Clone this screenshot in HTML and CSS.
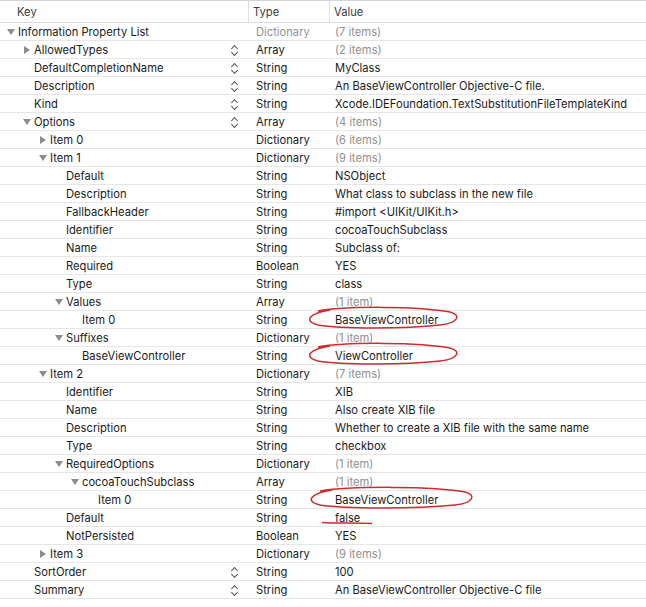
FILE: index.html
```html
<!DOCTYPE html>
<html>
<head>
<meta charset="utf-8">
<link rel="stylesheet" href="styles.css">
</head>
<body>
<div class="plist">
  <div class="hdr">
    <div class="hc hk">Key</div>
    <div class="hc ht">Type</div>
    <div class="hc hv">Value</div>
  </div>

  <div class="row"><div class="key l0"><span class="tri down"></span><span>Information Property List</span></div><div class="type dim">Dictionary</div><div class="val dim">(7 items)</div></div>
  <div class="row"><div class="key l1"><span class="tri right"></span><span>AllowedTypes</span><span class="step"></span></div><div class="type">Array</div><div class="val dim">(2 items)</div></div>
  <div class="row"><div class="key l1"><span class="tri"></span><span>DefaultCompletionName</span><span class="step"></span></div><div class="type">String</div><div class="val">MyClass</div></div>
  <div class="row"><div class="key l1"><span class="tri"></span><span>Description</span><span class="step"></span></div><div class="type">String</div><div class="val">An BaseViewController Objective-C file.</div></div>
  <div class="row"><div class="key l1"><span class="tri"></span><span>Kind</span><span class="step"></span></div><div class="type">String</div><div class="val">Xcode.IDEFoundation.TextSubstitutionFileTemplateKind</div></div>
  <div class="row"><div class="key l1"><span class="tri down"></span><span>Options</span><span class="step"></span></div><div class="type">Array</div><div class="val dim">(4 items)</div></div>
  <div class="row"><div class="key l2"><span class="tri right"></span><span>Item 0</span></div><div class="type">Dictionary</div><div class="val dim">(6 items)</div></div>
  <div class="row"><div class="key l2"><span class="tri down"></span><span>Item 1</span></div><div class="type">Dictionary</div><div class="val dim">(9 items)</div></div>
  <div class="row"><div class="key l3"><span class="tri"></span><span>Default</span></div><div class="type">String</div><div class="val">NSObject</div></div>
  <div class="row"><div class="key l3"><span class="tri"></span><span>Description</span></div><div class="type">String</div><div class="val">What class to subclass in the new file</div></div>
  <div class="row"><div class="key l3"><span class="tri"></span><span>FallbackHeader</span></div><div class="type">String</div><div class="val">#import &lt;UIKit/UIKit.h&gt;</div></div>
  <div class="row"><div class="key l3"><span class="tri"></span><span>Identifier</span></div><div class="type">String</div><div class="val">cocoaTouchSubclass</div></div>
  <div class="row"><div class="key l3"><span class="tri"></span><span>Name</span></div><div class="type">String</div><div class="val">Subclass of:</div></div>
  <div class="row"><div class="key l3"><span class="tri"></span><span>Required</span></div><div class="type">Boolean</div><div class="val">YES</div></div>
  <div class="row"><div class="key l3"><span class="tri"></span><span>Type</span></div><div class="type">String</div><div class="val">class</div></div>
  <div class="row"><div class="key l3"><span class="tri down"></span><span>Values</span></div><div class="type">Array</div><div class="val dim">(1 item)</div></div>
  <div class="row"><div class="key l4"><span class="tri"></span><span>Item 0</span></div><div class="type">String</div><div class="val">BaseViewController</div></div>
  <div class="row"><div class="key l3"><span class="tri down"></span><span>Suffixes</span></div><div class="type">Dictionary</div><div class="val dim">(1 item)</div></div>
  <div class="row"><div class="key l4"><span class="tri"></span><span>BaseViewController</span></div><div class="type">String</div><div class="val">ViewController</div></div>
  <div class="row"><div class="key l2"><span class="tri down"></span><span>Item 2</span></div><div class="type">Dictionary</div><div class="val dim">(7 items)</div></div>
  <div class="row"><div class="key l3"><span class="tri"></span><span>Identifier</span></div><div class="type">String</div><div class="val">XIB</div></div>
  <div class="row"><div class="key l3"><span class="tri"></span><span>Name</span></div><div class="type">String</div><div class="val">Also create XIB file</div></div>
  <div class="row"><div class="key l3"><span class="tri"></span><span>Description</span></div><div class="type">String</div><div class="val">Whether to create a XIB file with the same name</div></div>
  <div class="row"><div class="key l3"><span class="tri"></span><span>Type</span></div><div class="type">String</div><div class="val">checkbox</div></div>
  <div class="row"><div class="key l3"><span class="tri down"></span><span>RequiredOptions</span></div><div class="type">Dictionary</div><div class="val dim">(1 item)</div></div>
  <div class="row"><div class="key l4"><span class="tri down"></span><span>cocoaTouchSubclass</span></div><div class="type">Array</div><div class="val dim">(1 item)</div></div>
  <div class="row"><div class="key l5"><span class="tri"></span><span>Item 0</span></div><div class="type">String</div><div class="val">BaseViewController</div></div>
  <div class="row"><div class="key l3"><span class="tri"></span><span>Default</span></div><div class="type">String</div><div class="val">false</div></div>
  <div class="row"><div class="key l3"><span class="tri"></span><span>NotPersisted</span></div><div class="type">Boolean</div><div class="val">YES</div></div>
  <div class="row"><div class="key l2"><span class="tri right"></span><span>Item 3</span></div><div class="type">Dictionary</div><div class="val dim">(9 items)</div></div>
  <div class="row"><div class="key l1"><span class="tri"></span><span>SortOrder</span><span class="step"></span></div><div class="type">String</div><div class="val">100</div></div>
  <div class="row"><div class="key l1"><span class="tri"></span><span>Summary</span><span class="step"></span></div><div class="type">String</div><div class="val">An BaseViewController Objective-C file</div></div>

  <svg class="marks" width="646" height="607" viewBox="0 0 646 607">
    <path d="M318 311 C 345 306, 420 306, 450 312 C 462 315, 458 323, 440 325 C 405 329, 340 329, 318 325 C 305 322, 306 314, 330 310" />
    <path d="M318 347 C 345 342, 420 342, 450 348 C 462 351, 458 359, 440 361 C 405 365, 340 365, 318 361 C 305 358, 306 350, 330 346" />
    <path d="M320 491 C 350 486, 435 486, 465 492 C 477 495, 473 503, 455 505 C 415 509, 345 509, 320 505 C 306 502, 308 494, 332 490" />
    <path d="M322 522.5 C 338 523.5, 356 522.5, 372 523.5" />
  </svg>
</div>
</body>
</html>
```

FILE: styles.css
```css
* { box-sizing: border-box; }
html, body {
  margin: 0;
  padding: 0;
  background: #ffffff;
}
body {
  font-family: "Inter", "Liberation Sans", sans-serif;
  font-size: 11.2px;
  color: #1a1a1a;
  width: 646px;
  height: 607px;
  overflow: hidden;
}
.plist {
  position: relative;
  width: 646px;
}
.hdr {
  display: grid;
  grid-template-columns: 249px 81px 1fr;
  height: 23px;
  border-top: 1px solid #d4d4d4;
  border-bottom: 1px solid #d8d8d8;
  color: #3a3a3a;
}
.hc {
  display: flex;
  align-items: center;
  padding-left: 4px;
  padding-top: 1px;
}
.hk { padding-left: 17px; border-right: 1px solid #dedede; }
.ht { border-right: 1px solid #dedede; }
.row {
  display: grid;
  grid-template-columns: 249px 81px 1fr;
  height: 18px;
  border-bottom: 1px solid #e6e6e6;
  line-height: 17px;
}
.row > div { padding-top: 1px; }
.key {
  display: flex;
  align-items: flex-start;
  padding-right: 11px;
  white-space: nowrap;
}
.key > span:nth-child(2) { flex: 1; }
.l0 { padding-left: 7px; }
.l1 { padding-left: 23px; }
.l2 { padding-left: 39px; }
.l3 { padding-left: 55px; }
.l4 { padding-left: 71px; }
.l5 { padding-left: 87px; }
.tri {
  width: 11px;
  height: 17px;
  flex: none;
  position: relative;
}
.tri.right::before {
  content: "";
  position: absolute;
  left: 1px;
  top: 4px;
  border-left: 6px solid #8c8c8c;
  border-top: 4px solid transparent;
  border-bottom: 4px solid transparent;
}
.tri.down::before {
  content: "";
  position: absolute;
  left: 0;
  top: 5px;
  border-top: 6px solid #8c8c8c;
  border-left: 4px solid transparent;
  border-right: 4px solid transparent;
}
.step {
  width: 7px;
  height: 17px;
  flex: none;
  position: relative;
}
.step::before, .step::after {
  content: "";
  position: absolute;
  left: 1px;
  width: 4px;
  height: 4px;
  border-left: 1.2px solid #555;
  border-top: 1.2px solid #555;
}
.step::before { top: 4px; transform: rotate(45deg); }
.step::after { top: 8px; transform: rotate(-135deg); }
.type {
  padding-left: 7px;
  white-space: nowrap;
}
.val {
  padding-left: 5px;
  white-space: nowrap;
  overflow: hidden;
}
.dim { color: #8f8f8f; }
.marks {
  position: absolute;
  left: 0;
  top: 0;
  pointer-events: none;
}
.marks path {
  fill: none;
  stroke: #cc2b30;
  stroke-width: 1.5;
}
```
